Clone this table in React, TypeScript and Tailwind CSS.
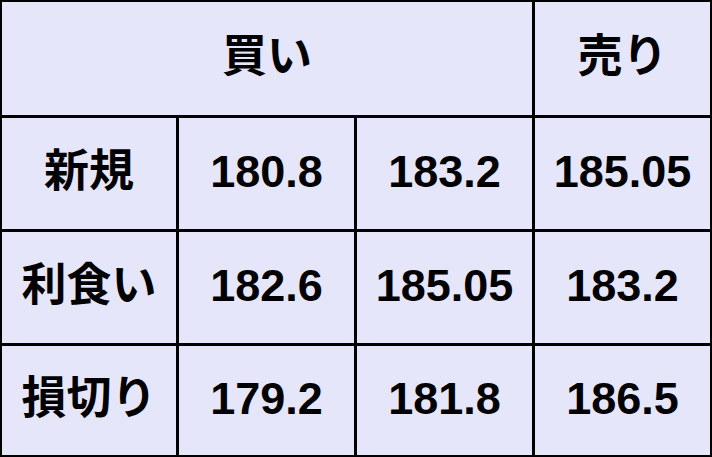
import React from 'react';

const rows = [
  { label: '新規', values: ['180.8', '183.2', '185.05'] },
  { label: '利食い', values: ['182.6', '185.05', '183.2'] },
  { label: '損切り', values: ['179.2', '181.8', '186.5'] },
];

const font = { fontFamily: '"Liberation Sans", Arial, "Noto Sans CJK JP", sans-serif' };

const Cell: React.FC<{ children: React.ReactNode; className?: string }> = ({ children, className = '' }) => (
  <div className={`bg-[#e6e6fa] flex items-center justify-center pb-[5px] text-[45px] font-bold text-black leading-none ${className}`}>
    {children}
  </div>
);

export default function App() {
  return (
    <div className="w-[712px] h-[457px] bg-black pl-[2px] pt-[2px] pr-[4px] pb-[4px]" style={font}>
      <div className="grid h-full grid-cols-[174px_175px_175px_175px] grid-rows-[113px_111px_111px_109px] gap-[3px]">
        <Cell className="col-span-3">買い</Cell>
        <Cell>売り</Cell>
        {rows.map(row => (
          <React.Fragment key={row.label}>
            <Cell>{row.label}</Cell>
            {row.values.map((v, i) => (
              <Cell key={i}>{v}</Cell>
            ))}
          </React.Fragment>
        ))}
      </div>
    </div>
  );
}
